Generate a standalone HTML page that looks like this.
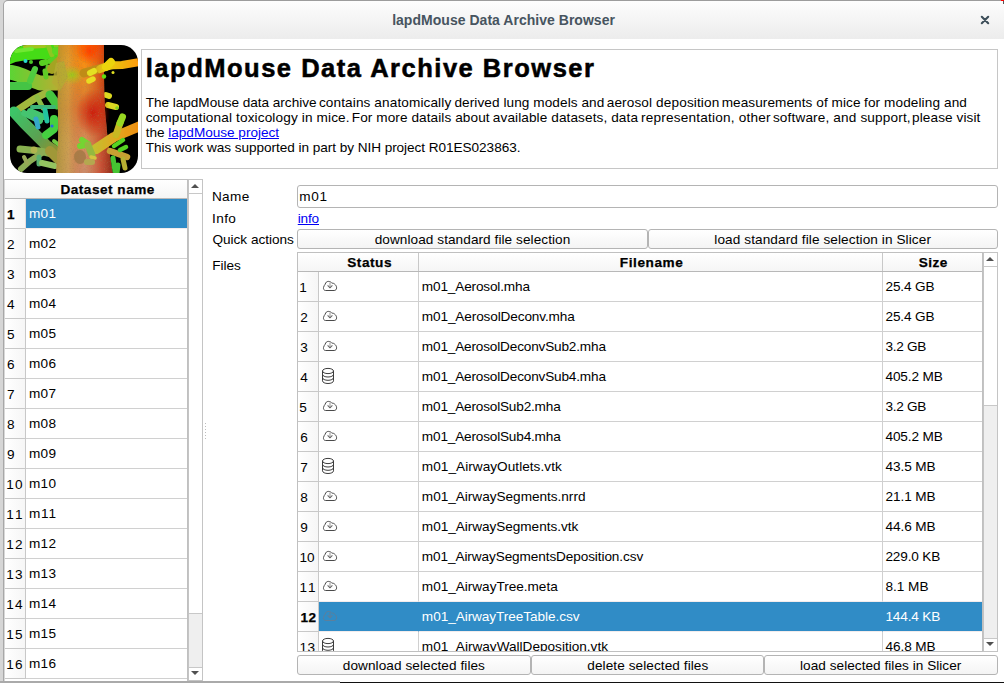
<!DOCTYPE html>
<html><head><meta charset="utf-8"><title>lapdMouse Data Archive Browser</title>
<style>
html,body{margin:0;padding:0;background:#fff;}
body{width:1004px;height:683px;overflow:hidden;position:relative;font-family:"Liberation Sans",sans-serif;font-size:13.6px;color:#000;}
#win{position:absolute;left:0;top:0;width:1004px;height:683px;background:#fff;overflow:hidden;}
.t{position:absolute;white-space:pre;line-height:16px;height:16px;}
#titlebar{position:absolute;left:3px;top:0;width:1001px;height:39px;background:linear-gradient(#fdfdfd,#ececec);border-top:1px solid #9c9c9c;border-left:1px solid #a4a4a4;border-top-left-radius:5px;box-sizing:border-box;}
#close{position:absolute;left:980px;top:15px;}
#lborder{position:absolute;left:0;top:0;width:3px;height:683px;background:#d6d6d6;}
#lb2{position:absolute;left:3px;top:39px;width:1px;height:644px;background:#a8a8a8;}
#tlc{position:absolute;left:3px;top:0;width:6px;height:6px;background:#d6d6d6;}
#tr1{position:absolute;left:1001px;top:0;width:3px;height:1px;background:#f00;}#tr2{position:absolute;left:1003px;top:1px;width:1px;height:3px;background:#555;}
#logo{position:absolute;left:10px;top:45px;width:128px;height:128px;}
#desc{position:absolute;left:141px;top:49px;width:855px;height:118px;border:1px solid #c6c6c6;box-sizing:content-box;}
.lnk{color:#0000f4;text-decoration:underline;}
#ltab{position:absolute;left:4px;top:179px;width:184px;border-left-color:#d8d8d8 !important;height:502px;border:1px solid #c0c0c0;border-bottom:none;box-sizing:border-box;overflow:hidden;background:#fff;}
#lhead{position:absolute;left:0;top:0;width:182px;height:18px;background:linear-gradient(#ffffff,#f5f5f5);border-bottom:1px solid #b8b8b8;}
.lrow{position:absolute;left:0;width:182px;height:30px;}
.lrow .rh{position:absolute;left:0;top:0;width:20px;height:29px;background:linear-gradient(90deg,#ffffff,#f6f6f6);border-right:1px solid #c8c8c8;border-bottom:1px solid #c8c8c8;}
.lrow .cell{position:absolute;left:21px;top:0;width:161px;height:29px;border-bottom:1px solid #d0d0d0;}
.lrow.sel .cell{background:#308cc6;border-bottom-color:#f3ecec;}
.lrow.sel .rh{border-right-color:#e8dede;}
#lscroll{position:absolute;left:188px;top:179px;width:15px;height:502px;background:#fff;border:1px solid #c4c4c4;box-sizing:border-box;}
#lscroll .upbox{position:absolute;left:0;top:0;width:13px;height:13px;border-bottom:1px solid #c8c8c8;}
#lscroll .trough{position:absolute;left:0;top:433px;width:13px;height:53px;background:#efefef;border-top:1px solid #c8c8c8;border-bottom:1px solid #c8c8c8;}
.arr{position:absolute;left:2px;width:0;height:0;border-left:4px solid transparent;border-right:4px solid transparent;}
.arr.up{top:4px;border-bottom:4px solid #505050;}
.arr.down{bottom:5px;border-top:4px solid #505050;}
#splitter{position:absolute;left:205px;top:423px;width:1px;height:16px;background:repeating-linear-gradient(#bdbdbd 0,#bdbdbd 1px,transparent 1px,transparent 3px);}
#name{position:absolute;left:297px;top:185px;width:701px;height:23px;border:1px solid #b4b4b4;border-radius:3px;box-sizing:border-box;background:#fff;}
.btn{position:absolute;height:20px;border:1px solid #b4b4b4;border-radius:3px;box-sizing:border-box;background:linear-gradient(#ffffff,#f4f4f4);}
#b1{left:297px;top:229px;width:351px;}
#b2{left:648px;top:229px;width:350px;}
#b3{left:297px;top:655px;width:234px;}
#b4{left:531px;top:655px;width:233px;}
#b5{left:764px;top:655px;width:234px;}
#ftab{position:absolute;left:297px;top:252px;width:686px;height:400px;border:1px solid #c0c0c0;box-sizing:border-box;overflow:hidden;background:#fff;}
#fhead{position:absolute;left:0;top:0;width:684px;height:18px;background:linear-gradient(#ffffff,#f5f5f5);border-bottom:1px solid #b8b8b8;}
.hc{position:absolute;top:0;height:18px;border-right:1px solid #c8c8c8;box-sizing:border-box;}
#hs{left:20px;width:101px}#hf{left:121px;width:464px}#hz{left:585px;width:99px;border-right:none}
.frow{position:absolute;left:0;width:684px;height:30px;}
.frow .rh{position:absolute;left:0;top:0;width:20px;height:29px;background:linear-gradient(90deg,#ffffff,#f6f6f6);border-right:1px solid #c8c8c8;border-bottom:1px solid #c8c8c8;}
.frow .c1,.frow .c2,.frow .c3{position:absolute;top:0;height:29px;border-bottom:1px solid #d0d0d0;border-right:1px solid #d0d0d0;box-sizing:content-box;}
.frow .c1{left:21px;width:99px}
.frow .c2{left:121px;width:463px}
.frow .c3{left:585px;width:99px;border-right:none}
.frow.sel .c1,.frow.sel .c2,.frow.sel .c3{background:#308cc6;border-right-color:#308cc6;border-bottom-color:#f3ecec;}
.frow.presel .c1,.frow.presel .c2,.frow.presel .c3{border-bottom-color:#f3ecec;}
.ic{position:absolute;}
.ic.cloud{left:3px;top:8px}
.ic.db{left:2px;top:5px}
#fscroll{position:absolute;left:983px;top:252px;width:15px;height:400px;background:#fff;border:1px solid #c4c4c4;box-sizing:border-box;}
#fscroll .upbox{position:absolute;left:0;top:0;width:13px;height:13px;border-bottom:1px solid #c8c8c8;}
#fscroll .trough{position:absolute;left:0;top:152px;width:13px;height:232px;background:#efefef;border-top:1px solid #c8c8c8;border-bottom:1px solid #c8c8c8;}
#botl{position:absolute;left:0;top:681px;width:340px;height:2px;background:#aaa;}
#botr{position:absolute;left:340px;top:682px;width:664px;height:1px;background:#111;}

.frow.sel .ic path{stroke:#5f7f9a !important;}
.h1{-webkit-text-stroke:0.55px #000;}
.bs{-webkit-text-stroke:0.25px #000;}

</style></head><body>
<div id="win">
<div id="tlc"></div><div id="titlebar"></div>
<div id="t0" class="t " style="left:392.15px;top:12.15px;font-size:14.00px;letter-spacing:0.028px;font-weight:bold;color:#47545f;">lapdMouse Data Archive Browser</div>
<svg id="close" width="10" height="10" viewBox="0 0 10 10"><path d="M1.8 1.8 L8.2 8.2 M8.2 1.8 L1.8 8.2" stroke="#3e4f5a" stroke-width="2.1" stroke-linecap="round"/></svg>
<div id="lborder"></div><div id="lb2"></div><div id="tr1"></div><div id="tr2"></div>
<div id="logo"><svg width="128" height="128" viewBox="0 0 128 128">
<defs>
<clipPath id="rc"><rect width="128" height="128" rx="17" ry="17"/></clipPath>
<linearGradient id="tv" x1="0" y1="0" x2="0" y2="1">
<stop offset="0" stop-color="#ff7400"/><stop offset="0.14" stop-color="#fa9010"/><stop offset="0.3" stop-color="#e48c28"/><stop offset="0.5" stop-color="#dc7434"/><stop offset="0.75" stop-color="#d4905c"/><stop offset="1" stop-color="#cc8c6c"/>
</linearGradient>
<linearGradient id="th" x1="0" y1="0" x2="1" y2="0">
<stop offset="0" stop-color="#a49430" stop-opacity="0.8"/><stop offset="0.22" stop-color="#c8a848" stop-opacity="0.55"/><stop offset="0.5" stop-color="#d05020" stop-opacity="0"/><stop offset="0.78" stop-color="#c42410" stop-opacity="0.55"/><stop offset="1" stop-color="#801808" stop-opacity="0.85"/>
</linearGradient>
<radialGradient id="redspot"><stop offset="0" stop-color="#cc1c0c" stop-opacity="0.95"/><stop offset="1" stop-color="#cc1c0c" stop-opacity="0"/></radialGradient>
<radialGradient id="hot"><stop offset="0" stop-color="#ff3c00" stop-opacity="0.95"/><stop offset="1" stop-color="#ff3c00" stop-opacity="0"/></radialGradient>
<radialGradient id="yspot"><stop offset="0" stop-color="#9ccc18" stop-opacity="1"/><stop offset="1" stop-color="#b8c020" stop-opacity="0"/></radialGradient>
<linearGradient id="ur" gradientUnits="userSpaceOnUse" x1="72" y1="0" x2="128" y2="0"><stop offset="0" stop-color="#c08c18"/><stop offset="0.45" stop-color="#ecd010"/><stop offset="0.75" stop-color="#f0b010"/><stop offset="1" stop-color="#ff9c08"/></linearGradient>
<linearGradient id="lr" gradientUnits="userSpaceOnUse" x1="82" y1="0" x2="128" y2="0"><stop offset="0" stop-color="#c4c030"/><stop offset="0.5" stop-color="#e0a820"/><stop offset="1" stop-color="#ee9010"/></linearGradient>
<linearGradient id="teal" gradientUnits="userSpaceOnUse" x1="48" y1="108" x2="4" y2="66"><stop offset="0" stop-color="#94902c"/><stop offset="0.4" stop-color="#5ca050"/><stop offset="1" stop-color="#3cc468"/></linearGradient>
<linearGradient id="bb" gradientUnits="userSpaceOnUse" x1="0" y1="0" x2="48" y2="0"><stop offset="0" stop-color="#5cd434"/><stop offset="0.55" stop-color="#8cc030"/><stop offset="1" stop-color="#b4b030"/></linearGradient>
<filter id="bl" x="-5%" y="-5%" width="110%" height="110%"><feGaussianBlur stdDeviation="0.6"/></filter>
<filter id="noise" x="0" y="0" width="100%" height="100%"><feTurbulence type="fractalNoise" baseFrequency="0.85" numOctaves="2" seed="4" result="n"/><feColorMatrix in="n" type="matrix" values="0 0 0 0 0.35  0 0 0 0 0.22  0 0 0 0 0.08  0 0 0 -2.2 1.05"/><feComposite in2="SourceGraphic" operator="in"/></filter>
</defs>
<g clip-path="url(#rc)">
<rect width="128" height="128" fill="#000"/>
<g filter="url(#bl)" fill="none" stroke-linecap="round" stroke-linejoin="round">
<!-- top-left: branch A -->
<path d="M-2 12 C10 6 24 8 44 6" stroke="#44dc14" stroke-width="15"/>
<path d="M16 1 L34 0" stroke="#a4c420" stroke-width="6"/>
<path d="M6 6 L22 4" stroke="#70e830" stroke-width="4"/>
<path d="M38 0 L42 10 M46 0 L48 8" stroke="#8cc820" stroke-width="5"/>
<circle cx="46" cy="6" r="4" fill="#5cd820" stroke="none"/>
<circle cx="15.5" cy="16" r="2" fill="#28d8d0" stroke="none"/>
<circle cx="21" cy="17" r="2" fill="#48c828" stroke="none"/>
<path d="M32 18 L36 17 M40 16 L46 14" stroke="#58d020" stroke-width="6"/>
<!-- branch B -->
<path d="M-2 27 C10 28 18 34 30 38 L48 38" stroke="url(#bb)" stroke-width="15"/>
<path d="M0 41 L18 41" stroke="#44c444" stroke-width="8"/>
<path d="M20 36 L25 24" stroke="#50cc40" stroke-width="6"/>
<path d="M36 32 L35 26 M38 26 L38 22" stroke="#60cc28" stroke-width="5"/>
<path d="M42 24 L50 16" stroke="#a4a420" stroke-width="10"/>
<!-- branch C (Y) -->
<path d="M38 47 L24 54 L9 64" stroke="#a0b83c" stroke-width="7"/>
<path d="M27 52 L33 63" stroke="#8cbc44" stroke-width="5"/>
<path d="M47 60 L40 50" stroke="#44c440" stroke-width="9"/>
<path d="M22 62 L44 62" stroke="#40b478" stroke-width="4"/>
<!-- teal cluster -->
<path d="M48 108 L36 100 L26 90 L14 78 L4 67" stroke="url(#teal)" stroke-width="11"/>
<path d="M14 68 L30 76 M20 66 L34 72" stroke="#44c470" stroke-width="6"/>
<path d="M26 74 L28 82" stroke="#34a8c8" stroke-width="5"/>
<path d="M35 65 L37 76" stroke="#24c4a0" stroke-width="5"/>
<path d="M44 74 L44 84 L36 90" stroke="#44d040" stroke-width="8"/>
<circle cx="42" cy="81" r="1.6" fill="#2868e0" stroke="none"/>
<path d="M44 96 L49 100" stroke="#70c840" stroke-width="4"/>
<!-- bottom-left cluster -->
<path d="M46 110 L30 106 L10 104" stroke="#88b050" stroke-width="7"/>
<circle cx="24" cy="105" r="3.4" fill="#b0b450" stroke="none"/>
<path d="M32 108 L20 116 L11 124" stroke="#8cac54" stroke-width="6"/>
<path d="M14 112 L17 118" stroke="#98a858" stroke-width="4"/>
<path d="M29 112 L29 119" stroke="#58b070" stroke-width="5"/>
<path d="M32 118 L45 121" stroke="#94c460" stroke-width="6"/>
<path d="M40 106 L48 114" stroke="#a09838" stroke-width="10"/>
<!-- right mid nubs behind trunk -->
<path d="M96 50 L99 51 M98 60 L106 62" stroke="#dcd820" stroke-width="6"/>
<circle cx="107" cy="63" r="1.8" fill="#80d020" stroke="none"/>
</g>
<!-- trunk -->
<g filter="url(#bl)">
<path d="M49 -2 C48 12 46 22 48 40 C47 60 49 80 48 100 L46 130 L103 130 C100 112 98 100 96 76 C94 55 94 35 94 -2 Z" fill="url(#tv)"/>
<path d="M49 -2 C48 12 46 22 48 40 C47 60 49 80 48 100 L46 130 L103 130 C100 112 98 100 96 76 C94 55 94 35 94 -2 Z" fill="url(#th)"/>
<ellipse cx="80" cy="6" rx="14" ry="14" fill="url(#hot)"/>
<ellipse cx="83" cy="68" rx="17" ry="24" fill="url(#redspot)"/>
<ellipse cx="62" cy="30" rx="13" ry="10" fill="url(#yspot)"/>
<path d="M46 18 L54 16 L58 32 L50 46 L42 38 Z" fill="#b4aa34" opacity="0.85"/>
<ellipse cx="70" cy="112" rx="6" ry="7" fill="#a07844" opacity="0.8"/>
</g>
<path d="M49 -2 C48 12 46 22 48 40 C47 60 49 80 48 100 L46 130 L103 130 C100 112 98 100 96 76 C94 55 94 35 94 -2 Z" fill="#fff" filter="url(#noise)" opacity="0.5"/>
<g filter="url(#bl)" fill="none" stroke-linecap="round" stroke-linejoin="round">
<!-- right upper branch -->
<path d="M74 28 L92 23" stroke="#c08c18" stroke-width="9"/>
<path d="M90 24 C98 20 104 20 112 20 L130 17" stroke="url(#ur)" stroke-width="8"/>
<path d="M96 22 L101 17" stroke="#ecd410" stroke-width="8"/>
<circle cx="94" cy="31.5" r="2.2" fill="#60e010" stroke="none"/>
<circle cx="103" cy="27.5" r="1.5" fill="#e0e020" stroke="none"/>
<path d="M80 28 L84 26" stroke="#e4e020" stroke-width="6"/>
<path d="M79 36 L83 34" stroke="#e8dc20" stroke-width="5.5"/>
<!-- right lower branch -->
<path d="M86 104 L104 92 L130 81" stroke="url(#lr)" stroke-width="10"/>
<path d="M106 90 L110 78" stroke="#c8b820" stroke-width="7"/>
<path d="M110 78 L112.500 72" stroke="#98d820" stroke-width="7"/>
<path d="M100 106 L117 112" stroke="#c8a030" stroke-width="6.500"/>
<path d="M113 114 L115 123" stroke="#b8b030" stroke-width="5"/>
<path d="M104 101 L113 95 M110 105 L116 102" stroke="#54d420" stroke-width="4.500"/>
<path d="M103 113 L105 126 M108 120 L107 128" stroke="#44c430" stroke-width="5"/>
<!-- front nub -->
<path d="M72 95 L78 99 M70 101 L76 100" stroke="#74d430" stroke-width="6"/>
<path d="M78 100 L82 110" stroke="#94b840" stroke-width="7"/>
<path d="M81 112 L85 113" stroke="#d4c440" stroke-width="3.500"/>
<path d="M77 117 L82 117" stroke="#b4a850" stroke-width="6"/>
</g>
</g>
</svg>
</div>
<div id="desc"></div>
<div id="t1" class="t h1" style="left:145.77px;top:60.16px;font-size:25.50px;letter-spacing:1.513px;font-weight:bold;">lapdMouse Data Archive Browser</div>
<div id="t2" class="t " style="left:145.67px;top:95.29px;font-size:13.60px;letter-spacing:-0.028px;">The lapdMouse data archive</div>
<div id="t3" class="t " style="left:318.91px;top:95.29px;font-size:13.60px;letter-spacing:0.116px;">contains anatomically</div>
<div id="t4" class="t " style="left:454.48px;top:95.29px;font-size:13.60px;letter-spacing:0.078px;">derived lung models and</div>
<div id="t5" class="t " style="left:606.72px;top:95.29px;font-size:13.60px;letter-spacing:0.130px;">aerosol deposition</div>
<div id="t6" class="t " style="left:721.67px;top:95.29px;font-size:13.60px;letter-spacing:0.071px;">measurements of mice</div>
<div id="t7" class="t " style="left:864.00px;top:95.29px;font-size:13.60px;letter-spacing:0.106px;">for modeling and</div>
<div id="t8" class="t " style="left:145.67px;top:110.29px;font-size:13.60px;letter-spacing:0.139px;">computational toxicology in mice.</div>
<div id="t9" class="t " style="left:351.77px;top:110.29px;font-size:13.60px;letter-spacing:0.085px;">For more datails about</div>
<div id="t10" class="t " style="left:492.86px;top:110.29px;font-size:13.60px;letter-spacing:0.098px;">available datasets, data</div>
<div id="t11" class="t " style="left:641.05px;top:110.29px;font-size:13.60px;letter-spacing:0.201px;">representation, other</div>
<div id="t12" class="t " style="left:772.91px;top:110.29px;font-size:13.60px;letter-spacing:0.152px;">software, and support,</div>
<div id="t13" class="t " style="left:912.10px;top:110.29px;font-size:13.60px;letter-spacing:0.094px;">please visit</div>
<div id="t14" class="t " style="left:145.67px;top:125.29px;font-size:13.60px;letter-spacing:-0.019px;">the <span class="lnk">lapdMouse project</span></div>
<div id="t15" class="t " style="left:145.67px;top:140.29px;font-size:13.60px;letter-spacing:-0.052px;">This work was supported in part by NIH project R01ES023863.</div>
<div id="ltab">
<div id="lhead"></div>
<div class="lrow sel" style="top:19px"><div class="rh"></div><div class="cell"></div></div>
<div class="lrow" style="top:49px"><div class="rh"></div><div class="cell"></div></div>
<div class="lrow" style="top:79px"><div class="rh"></div><div class="cell"></div></div>
<div class="lrow" style="top:109px"><div class="rh"></div><div class="cell"></div></div>
<div class="lrow" style="top:139px"><div class="rh"></div><div class="cell"></div></div>
<div class="lrow" style="top:169px"><div class="rh"></div><div class="cell"></div></div>
<div class="lrow" style="top:199px"><div class="rh"></div><div class="cell"></div></div>
<div class="lrow" style="top:229px"><div class="rh"></div><div class="cell"></div></div>
<div class="lrow" style="top:259px"><div class="rh"></div><div class="cell"></div></div>
<div class="lrow" style="top:289px"><div class="rh"></div><div class="cell"></div></div>
<div class="lrow" style="top:319px"><div class="rh"></div><div class="cell"></div></div>
<div class="lrow" style="top:349px"><div class="rh"></div><div class="cell"></div></div>
<div class="lrow" style="top:379px"><div class="rh"></div><div class="cell"></div></div>
<div class="lrow" style="top:409px"><div class="rh"></div><div class="cell"></div></div>
<div class="lrow" style="top:439px"><div class="rh"></div><div class="cell"></div></div>
<div class="lrow" style="top:469px"><div class="rh"></div><div class="cell"></div></div>
</div>
<div id="t16" class="t  bs" style="left:60.43px;top:182.29px;font-size:13.60px;letter-spacing:0.504px;font-weight:bold;">Dataset name</div>
<div id="t17" class="t  bs" style="left:7.10px;top:207.29px;font-size:13.60px;letter-spacing:0.000px;font-weight:bold;">1</div>
<div id="t18" class="t " style="left:29.05px;top:206.29px;font-size:13.60px;letter-spacing:0.223px;color:#fff;">m01</div>
<div id="t19" class="t " style="left:7.05px;top:237.29px;font-size:13.60px;letter-spacing:0.000px;">2</div>
<div id="t20" class="t " style="left:29.05px;top:236.29px;font-size:13.60px;letter-spacing:0.223px;">m02</div>
<div id="t21" class="t " style="left:7.05px;top:267.29px;font-size:13.60px;letter-spacing:0.000px;">3</div>
<div id="t22" class="t " style="left:29.05px;top:266.29px;font-size:13.60px;letter-spacing:0.223px;">m03</div>
<div id="t23" class="t " style="left:7.05px;top:297.29px;font-size:13.60px;letter-spacing:0.000px;">4</div>
<div id="t24" class="t " style="left:29.05px;top:296.29px;font-size:13.60px;letter-spacing:0.223px;">m04</div>
<div id="t25" class="t " style="left:7.05px;top:327.29px;font-size:13.60px;letter-spacing:0.000px;">5</div>
<div id="t26" class="t " style="left:29.05px;top:326.29px;font-size:13.60px;letter-spacing:0.223px;">m05</div>
<div id="t27" class="t " style="left:7.05px;top:357.29px;font-size:13.60px;letter-spacing:0.000px;">6</div>
<div id="t28" class="t " style="left:29.05px;top:356.29px;font-size:13.60px;letter-spacing:0.223px;">m06</div>
<div id="t29" class="t " style="left:7.05px;top:387.29px;font-size:13.60px;letter-spacing:0.000px;">7</div>
<div id="t30" class="t " style="left:29.05px;top:386.29px;font-size:13.60px;letter-spacing:0.223px;">m07</div>
<div id="t31" class="t " style="left:7.05px;top:417.29px;font-size:13.60px;letter-spacing:0.000px;">8</div>
<div id="t32" class="t " style="left:29.05px;top:416.29px;font-size:13.60px;letter-spacing:0.223px;">m08</div>
<div id="t33" class="t " style="left:7.05px;top:447.29px;font-size:13.60px;letter-spacing:0.000px;">9</div>
<div id="t34" class="t " style="left:29.05px;top:446.29px;font-size:13.60px;letter-spacing:0.223px;">m09</div>
<div id="t35" class="t " style="left:6.34px;top:477.29px;font-size:13.60px;letter-spacing:1.055px;">10</div>
<div id="t36" class="t " style="left:29.05px;top:476.29px;font-size:13.60px;letter-spacing:0.223px;">m10</div>
<div id="t37" class="t " style="left:6.34px;top:507.29px;font-size:13.60px;letter-spacing:2.055px;">11</div>
<div id="t38" class="t " style="left:29.05px;top:506.29px;font-size:13.60px;letter-spacing:0.731px;">m11</div>
<div id="t39" class="t " style="left:6.34px;top:537.29px;font-size:13.60px;letter-spacing:1.055px;">12</div>
<div id="t40" class="t " style="left:29.05px;top:536.29px;font-size:13.60px;letter-spacing:0.223px;">m12</div>
<div id="t41" class="t " style="left:6.34px;top:567.29px;font-size:13.60px;letter-spacing:1.055px;">13</div>
<div id="t42" class="t " style="left:29.05px;top:566.29px;font-size:13.60px;letter-spacing:0.223px;">m13</div>
<div id="t43" class="t " style="left:6.34px;top:597.29px;font-size:13.60px;letter-spacing:1.055px;">14</div>
<div id="t44" class="t " style="left:29.05px;top:596.29px;font-size:13.60px;letter-spacing:0.223px;">m14</div>
<div id="t45" class="t " style="left:6.34px;top:627.29px;font-size:13.60px;letter-spacing:1.055px;">15</div>
<div id="t46" class="t " style="left:29.05px;top:626.29px;font-size:13.60px;letter-spacing:0.223px;">m15</div>
<div id="t47" class="t " style="left:6.34px;top:657.29px;font-size:13.60px;letter-spacing:1.055px;">16</div>
<div id="t48" class="t " style="left:29.05px;top:656.29px;font-size:13.60px;letter-spacing:0.223px;">m16</div>
<div id="lscroll"><div class="upbox"></div><div class="arr up"></div><div class="trough"></div><div class="arr down"></div></div>
<div id="splitter"></div>
<div id="t49" class="t " style="left:211.96px;top:189.29px;font-size:13.60px;letter-spacing:0.351px;">Name</div>
<div id="t50" class="t " style="left:211.96px;top:211.29px;font-size:13.60px;letter-spacing:0.434px;">Info</div>
<div id="t51" class="t " style="left:212.48px;top:232.29px;font-size:13.60px;letter-spacing:-0.012px;">Quick actions</div>
<div id="t52" class="t " style="left:212.15px;top:258.29px;font-size:13.60px;letter-spacing:-0.036px;">Files</div>
<div id="name"></div>
<div id="t53" class="t " style="left:299.34px;top:189.29px;font-size:13.60px;letter-spacing:0.648px;">m01</div>
<div id="t54" class="t lnk" style="left:297.76px;top:211.29px;font-size:13.60px;letter-spacing:-0.164px;">info</div>
<div class="btn" id="b1"></div>
<div class="btn" id="b2"></div>
<div id="t55" class="t " style="left:374.67px;top:232.29px;font-size:13.60px;letter-spacing:0.071px;">download standard file selection</div>
<div id="t56" class="t " style="left:714.34px;top:232.29px;font-size:13.60px;letter-spacing:0.095px;">load standard file selection in Slicer</div>
<div id="ftab">
<div id="fhead"><div class="hc" id="hs"></div><div class="hc" id="hf"></div><div class="hc" id="hz"></div></div>
<div class="frow" style="top:19px"><div class="rh"></div><div class="c1"><svg class="ic cloud" width="16" height="12" viewBox="-1 -1 16 12"><path d="M2.6 9.5 C1 9.5 0.2 8 0.5 6.5 C0.8 5 1.5 4.2 2.2 3.2 C2.6 1.4 3.8 0.4 5.3 0.4 C6.9 0.4 8.3 1.1 9.0 2.3 C9.6 2.0 10.6 2.2 11.4 2.9 C12.8 4 13.6 5.3 13.6 6.8 C13.6 8.4 12.6 9.5 11.2 9.5 Z" fill="none" stroke="#4a4a4a" stroke-width="1"/><path d="M7 1.4 V6.4" fill="none" stroke="#a0a0a0" stroke-width="1.1"/><path d="M4.6 4.4 L7 6.8 L9.4 4.4" fill="none" stroke="#666" stroke-width="1.1"/></svg></div><div class="c2"></div><div class="c3"></div></div>
<div id="t57" class="t " style="left:1.34px;top:27.29px;font-size:13.60px;letter-spacing:0.000px;">1</div>
<div id="t58" class="t " style="left:123.86px;top:26.29px;font-size:13.60px;letter-spacing:-0.160px;">m01_Aerosol.mha</div>
<div id="t59" class="t " style="left:587.48px;top:26.29px;font-size:13.60px;letter-spacing:-0.116px;">25.4 GB</div>
<div class="frow" style="top:49px"><div class="rh"></div><div class="c1"><svg class="ic cloud" width="16" height="12" viewBox="-1 -1 16 12"><path d="M2.6 9.5 C1 9.5 0.2 8 0.5 6.5 C0.8 5 1.5 4.2 2.2 3.2 C2.6 1.4 3.8 0.4 5.3 0.4 C6.9 0.4 8.3 1.1 9.0 2.3 C9.6 2.0 10.6 2.2 11.4 2.9 C12.8 4 13.6 5.3 13.6 6.8 C13.6 8.4 12.6 9.5 11.2 9.5 Z" fill="none" stroke="#4a4a4a" stroke-width="1"/><path d="M7 1.4 V6.4" fill="none" stroke="#a0a0a0" stroke-width="1.1"/><path d="M4.6 4.4 L7 6.8 L9.4 4.4" fill="none" stroke="#666" stroke-width="1.1"/></svg></div><div class="c2"></div><div class="c3"></div></div>
<div id="t60" class="t " style="left:2.24px;top:57.29px;font-size:13.60px;letter-spacing:0.000px;">2</div>
<div id="t61" class="t " style="left:123.86px;top:56.29px;font-size:13.60px;letter-spacing:-0.125px;">m01_AerosolDeconv.mha</div>
<div id="t62" class="t " style="left:587.48px;top:56.29px;font-size:13.60px;letter-spacing:-0.116px;">25.4 GB</div>
<div class="frow" style="top:79px"><div class="rh"></div><div class="c1"><svg class="ic cloud" width="16" height="12" viewBox="-1 -1 16 12"><path d="M2.6 9.5 C1 9.5 0.2 8 0.5 6.5 C0.8 5 1.5 4.2 2.2 3.2 C2.6 1.4 3.8 0.4 5.3 0.4 C6.9 0.4 8.3 1.1 9.0 2.3 C9.6 2.0 10.6 2.2 11.4 2.9 C12.8 4 13.6 5.3 13.6 6.8 C13.6 8.4 12.6 9.5 11.2 9.5 Z" fill="none" stroke="#4a4a4a" stroke-width="1"/><path d="M7 1.4 V6.4" fill="none" stroke="#a0a0a0" stroke-width="1.1"/><path d="M4.6 4.4 L7 6.8 L9.4 4.4" fill="none" stroke="#666" stroke-width="1.1"/></svg></div><div class="c2"></div><div class="c3"></div></div>
<div id="t63" class="t " style="left:2.24px;top:87.29px;font-size:13.60px;letter-spacing:0.000px;">3</div>
<div id="t64" class="t " style="left:123.86px;top:86.29px;font-size:13.60px;letter-spacing:-0.169px;">m01_AerosolDeconvSub2.mha</div>
<div id="t65" class="t " style="left:587.48px;top:86.29px;font-size:13.60px;letter-spacing:-0.296px;">3.2 GB</div>
<div class="frow" style="top:109px"><div class="rh"></div><div class="c1"><svg class="ic db" width="14" height="18" viewBox="-1 -1 14 18"><ellipse cx="6" cy="3" rx="5.5" ry="2.6" fill="none" stroke="#3c3c3c" stroke-width="1"/><path d="M0.5 3 V12.8 C0.5 14.4 3 15.5 6 15.5 C9 15.5 11.5 14.4 11.5 12.8 V3" fill="none" stroke="#3c3c3c" stroke-width="1"/><path d="M0.5 6.3 C0.5 7.9 3 9 6 9 C9 9 11.5 7.9 11.5 6.3 M0.5 9.6 C0.5 11.2 3 12.3 6 12.3 C9 12.3 11.5 11.2 11.5 9.6" fill="none" stroke="#3c3c3c" stroke-width="1"/></svg></div><div class="c2"></div><div class="c3"></div></div>
<div id="t66" class="t " style="left:2.24px;top:117.29px;font-size:13.60px;letter-spacing:0.000px;">4</div>
<div id="t67" class="t " style="left:123.86px;top:116.29px;font-size:13.60px;letter-spacing:-0.169px;">m01_AerosolDeconvSub4.mha</div>
<div id="t68" class="t " style="left:587.48px;top:116.29px;font-size:13.60px;letter-spacing:-0.110px;">405.2 MB</div>
<div class="frow" style="top:139px"><div class="rh"></div><div class="c1"><svg class="ic cloud" width="16" height="12" viewBox="-1 -1 16 12"><path d="M2.6 9.5 C1 9.5 0.2 8 0.5 6.5 C0.8 5 1.5 4.2 2.2 3.2 C2.6 1.4 3.8 0.4 5.3 0.4 C6.9 0.4 8.3 1.1 9.0 2.3 C9.6 2.0 10.6 2.2 11.4 2.9 C12.8 4 13.6 5.3 13.6 6.8 C13.6 8.4 12.6 9.5 11.2 9.5 Z" fill="none" stroke="#4a4a4a" stroke-width="1"/><path d="M7 1.4 V6.4" fill="none" stroke="#a0a0a0" stroke-width="1.1"/><path d="M4.6 4.4 L7 6.8 L9.4 4.4" fill="none" stroke="#666" stroke-width="1.1"/></svg></div><div class="c2"></div><div class="c3"></div></div>
<div id="t69" class="t " style="left:1.34px;top:147.29px;font-size:13.60px;letter-spacing:0.000px;">5</div>
<div id="t70" class="t " style="left:123.86px;top:146.29px;font-size:13.60px;letter-spacing:-0.179px;">m01_AerosolSub2.mha</div>
<div id="t71" class="t " style="left:587.48px;top:146.29px;font-size:13.60px;letter-spacing:-0.296px;">3.2 GB</div>
<div class="frow" style="top:169px"><div class="rh"></div><div class="c1"><svg class="ic cloud" width="16" height="12" viewBox="-1 -1 16 12"><path d="M2.6 9.5 C1 9.5 0.2 8 0.5 6.5 C0.8 5 1.5 4.2 2.2 3.2 C2.6 1.4 3.8 0.4 5.3 0.4 C6.9 0.4 8.3 1.1 9.0 2.3 C9.6 2.0 10.6 2.2 11.4 2.9 C12.8 4 13.6 5.3 13.6 6.8 C13.6 8.4 12.6 9.5 11.2 9.5 Z" fill="none" stroke="#4a4a4a" stroke-width="1"/><path d="M7 1.4 V6.4" fill="none" stroke="#a0a0a0" stroke-width="1.1"/><path d="M4.6 4.4 L7 6.8 L9.4 4.4" fill="none" stroke="#666" stroke-width="1.1"/></svg></div><div class="c2"></div><div class="c3"></div></div>
<div id="t72" class="t " style="left:2.24px;top:177.29px;font-size:13.60px;letter-spacing:0.000px;">6</div>
<div id="t73" class="t " style="left:123.86px;top:176.29px;font-size:13.60px;letter-spacing:-0.179px;">m01_AerosolSub4.mha</div>
<div id="t74" class="t " style="left:587.48px;top:176.29px;font-size:13.60px;letter-spacing:-0.110px;">405.2 MB</div>
<div class="frow" style="top:199px"><div class="rh"></div><div class="c1"><svg class="ic db" width="14" height="18" viewBox="-1 -1 14 18"><ellipse cx="6" cy="3" rx="5.5" ry="2.6" fill="none" stroke="#3c3c3c" stroke-width="1"/><path d="M0.5 3 V12.8 C0.5 14.4 3 15.5 6 15.5 C9 15.5 11.5 14.4 11.5 12.8 V3" fill="none" stroke="#3c3c3c" stroke-width="1"/><path d="M0.5 6.3 C0.5 7.9 3 9 6 9 C9 9 11.5 7.9 11.5 6.3 M0.5 9.6 C0.5 11.2 3 12.3 6 12.3 C9 12.3 11.5 11.2 11.5 9.6" fill="none" stroke="#3c3c3c" stroke-width="1"/></svg></div><div class="c2"></div><div class="c3"></div></div>
<div id="t75" class="t " style="left:2.24px;top:207.29px;font-size:13.60px;letter-spacing:0.000px;">7</div>
<div id="t76" class="t " style="left:123.86px;top:206.29px;font-size:13.60px;letter-spacing:0.044px;">m01_AirwayOutlets.vtk</div>
<div id="t77" class="t " style="left:587.48px;top:206.29px;font-size:13.60px;letter-spacing:-0.074px;">43.5 MB</div>
<div class="frow" style="top:229px"><div class="rh"></div><div class="c1"><svg class="ic cloud" width="16" height="12" viewBox="-1 -1 16 12"><path d="M2.6 9.5 C1 9.5 0.2 8 0.5 6.5 C0.8 5 1.5 4.2 2.2 3.2 C2.6 1.4 3.8 0.4 5.3 0.4 C6.9 0.4 8.3 1.1 9.0 2.3 C9.6 2.0 10.6 2.2 11.4 2.9 C12.8 4 13.6 5.3 13.6 6.8 C13.6 8.4 12.6 9.5 11.2 9.5 Z" fill="none" stroke="#4a4a4a" stroke-width="1"/><path d="M7 1.4 V6.4" fill="none" stroke="#a0a0a0" stroke-width="1.1"/><path d="M4.6 4.4 L7 6.8 L9.4 4.4" fill="none" stroke="#666" stroke-width="1.1"/></svg></div><div class="c2"></div><div class="c3"></div></div>
<div id="t78" class="t " style="left:2.24px;top:237.29px;font-size:13.60px;letter-spacing:0.000px;">8</div>
<div id="t79" class="t " style="left:123.86px;top:236.29px;font-size:13.60px;letter-spacing:-0.016px;">m01_AirwaySegments.nrrd</div>
<div id="t80" class="t " style="left:587.48px;top:236.29px;font-size:13.60px;letter-spacing:-0.074px;">21.1 MB</div>
<div class="frow" style="top:259px"><div class="rh"></div><div class="c1"><svg class="ic cloud" width="16" height="12" viewBox="-1 -1 16 12"><path d="M2.6 9.5 C1 9.5 0.2 8 0.5 6.5 C0.8 5 1.5 4.2 2.2 3.2 C2.6 1.4 3.8 0.4 5.3 0.4 C6.9 0.4 8.3 1.1 9.0 2.3 C9.6 2.0 10.6 2.2 11.4 2.9 C12.8 4 13.6 5.3 13.6 6.8 C13.6 8.4 12.6 9.5 11.2 9.5 Z" fill="none" stroke="#4a4a4a" stroke-width="1"/><path d="M7 1.4 V6.4" fill="none" stroke="#a0a0a0" stroke-width="1.1"/><path d="M4.6 4.4 L7 6.8 L9.4 4.4" fill="none" stroke="#666" stroke-width="1.1"/></svg></div><div class="c2"></div><div class="c3"></div></div>
<div id="t81" class="t " style="left:2.24px;top:267.29px;font-size:13.60px;letter-spacing:0.000px;">9</div>
<div id="t82" class="t " style="left:123.86px;top:266.29px;font-size:13.60px;letter-spacing:-0.039px;">m01_AirwaySegments.vtk</div>
<div id="t83" class="t " style="left:587.48px;top:266.29px;font-size:13.60px;letter-spacing:-0.074px;">44.6 MB</div>
<div class="frow" style="top:289px"><div class="rh"></div><div class="c1"><svg class="ic cloud" width="16" height="12" viewBox="-1 -1 16 12"><path d="M2.6 9.5 C1 9.5 0.2 8 0.5 6.5 C0.8 5 1.5 4.2 2.2 3.2 C2.6 1.4 3.8 0.4 5.3 0.4 C6.9 0.4 8.3 1.1 9.0 2.3 C9.6 2.0 10.6 2.2 11.4 2.9 C12.8 4 13.6 5.3 13.6 6.8 C13.6 8.4 12.6 9.5 11.2 9.5 Z" fill="none" stroke="#4a4a4a" stroke-width="1"/><path d="M7 1.4 V6.4" fill="none" stroke="#a0a0a0" stroke-width="1.1"/><path d="M4.6 4.4 L7 6.8 L9.4 4.4" fill="none" stroke="#666" stroke-width="1.1"/></svg></div><div class="c2"></div><div class="c3"></div></div>
<div id="t84" class="t " style="left:1.53px;top:297.29px;font-size:13.60px;letter-spacing:-0.085px;">10</div>
<div id="t85" class="t " style="left:123.86px;top:296.29px;font-size:13.60px;letter-spacing:-0.099px;">m01_AirwaySegmentsDeposition.csv</div>
<div id="t86" class="t " style="left:587.48px;top:296.29px;font-size:13.60px;letter-spacing:-0.155px;">229.0 KB</div>
<div class="frow presel" style="top:319px"><div class="rh"></div><div class="c1"><svg class="ic cloud" width="16" height="12" viewBox="-1 -1 16 12"><path d="M2.6 9.5 C1 9.5 0.2 8 0.5 6.5 C0.8 5 1.5 4.2 2.2 3.2 C2.6 1.4 3.8 0.4 5.3 0.4 C6.9 0.4 8.3 1.1 9.0 2.3 C9.6 2.0 10.6 2.2 11.4 2.9 C12.8 4 13.6 5.3 13.6 6.8 C13.6 8.4 12.6 9.5 11.2 9.5 Z" fill="none" stroke="#4a4a4a" stroke-width="1"/><path d="M7 1.4 V6.4" fill="none" stroke="#a0a0a0" stroke-width="1.1"/><path d="M4.6 4.4 L7 6.8 L9.4 4.4" fill="none" stroke="#666" stroke-width="1.1"/></svg></div><div class="c2"></div><div class="c3"></div></div>
<div id="t87" class="t " style="left:1.53px;top:327.29px;font-size:13.60px;letter-spacing:1.815px;">11</div>
<div id="t88" class="t " style="left:123.86px;top:326.29px;font-size:13.60px;letter-spacing:-0.022px;">m01_AirwayTree.meta</div>
<div id="t89" class="t " style="left:587.48px;top:326.29px;font-size:13.60px;letter-spacing:-0.018px;">8.1 MB</div>
<div class="frow sel" style="top:349px"><div class="rh"></div><div class="c1"><svg class="ic cloud" width="16" height="12" viewBox="-1 -1 16 12"><path d="M2.6 9.5 C1 9.5 0.2 8 0.5 6.5 C0.8 5 1.5 4.2 2.2 3.2 C2.6 1.4 3.8 0.4 5.3 0.4 C6.9 0.4 8.3 1.1 9.0 2.3 C9.6 2.0 10.6 2.2 11.4 2.9 C12.8 4 13.6 5.3 13.6 6.8 C13.6 8.4 12.6 9.5 11.2 9.5 Z" fill="none" stroke="#4a4a4a" stroke-width="1"/><path d="M7 1.4 V6.4" fill="none" stroke="#a0a0a0" stroke-width="1.1"/><path d="M4.6 4.4 L7 6.8 L9.4 4.4" fill="none" stroke="#666" stroke-width="1.1"/></svg></div><div class="c2"></div><div class="c3"></div></div>
<div id="t90" class="t  bs" style="left:2.43px;top:357.29px;font-size:13.60px;letter-spacing:0.445px;font-weight:bold;">12</div>
<div id="t91" class="t " style="left:123.86px;top:356.29px;font-size:13.60px;letter-spacing:-0.054px;color:#fff;">m01_AirwayTreeTable.csv</div>
<div id="t92" class="t " style="left:587.48px;top:356.29px;font-size:13.60px;letter-spacing:-0.155px;color:#fff;">144.4 KB</div>
<div class="frow" style="top:379px"><div class="rh"></div><div class="c1"><svg class="ic db" width="14" height="18" viewBox="-1 -1 14 18"><ellipse cx="6" cy="3" rx="5.5" ry="2.6" fill="none" stroke="#3c3c3c" stroke-width="1"/><path d="M0.5 3 V12.8 C0.5 14.4 3 15.5 6 15.5 C9 15.5 11.5 14.4 11.5 12.8 V3" fill="none" stroke="#3c3c3c" stroke-width="1"/><path d="M0.5 6.3 C0.5 7.9 3 9 6 9 C9 9 11.5 7.9 11.5 6.3 M0.5 9.6 C0.5 11.2 3 12.3 6 12.3 C9 12.3 11.5 11.2 11.5 9.6" fill="none" stroke="#3c3c3c" stroke-width="1"/></svg></div><div class="c2"></div><div class="c3"></div></div>
<div id="t93" class="t " style="left:1.44px;top:387.29px;font-size:13.60px;letter-spacing:0.455px;">13</div>
<div id="t94" class="t " style="left:123.86px;top:386.29px;font-size:13.60px;letter-spacing:0.001px;">m01_AirwayWallDeposition.vtk</div>
<div id="t95" class="t " style="left:587.48px;top:386.29px;font-size:13.60px;letter-spacing:-0.074px;">46.8 MB</div>
</div>
<div id="t96" class="t  bs" style="left:347.24px;top:255.29px;font-size:13.60px;letter-spacing:0.547px;font-weight:bold;">Status</div>
<div id="t97" class="t  bs" style="left:619.86px;top:255.29px;font-size:13.60px;letter-spacing:0.559px;font-weight:bold;">Filename</div>
<div id="t98" class="t  bs" style="left:918.81px;top:255.29px;font-size:13.60px;letter-spacing:0.439px;font-weight:bold;">Size</div>
<div id="fscroll"><div class="upbox"></div><div class="arr up"></div><div class="trough"></div><div class="arr down"></div></div>
<div class="btn" id="b3"></div>
<div class="btn" id="b4"></div>
<div class="btn" id="b5"></div>
<div id="t99" class="t " style="left:342.86px;top:658.29px;font-size:13.60px;letter-spacing:0.067px;">download selected files</div>
<div id="t100" class="t " style="left:587.24px;top:658.29px;font-size:13.60px;letter-spacing:0.084px;">delete selected files</div>
<div id="t101" class="t " style="left:800.05px;top:658.29px;font-size:13.60px;letter-spacing:0.039px;">load selected files in Slicer</div>
<div id="botl"></div><div id="botr"></div>
</div>
</body></html>
